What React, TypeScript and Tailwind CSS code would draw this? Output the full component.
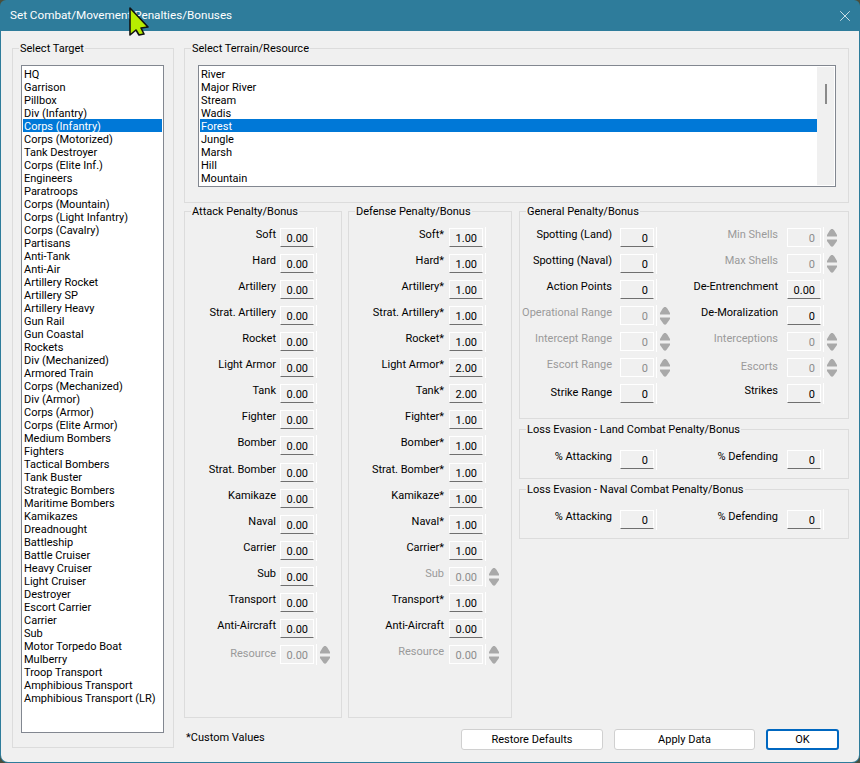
import { X } from "lucide-react";
import type { ReactNode } from "react";

const targets = [
  "HQ", "Garrison", "Pillbox", "Div (Infantry)", "Corps (Infantry)", "Corps (Motorized)", "Tank Destroyer",
  "Corps (Elite Inf.)", "Engineers", "Paratroops", "Corps (Mountain)", "Corps (Light Infantry)", "Corps (Cavalry)",
  "Partisans", "Anti-Tank", "Anti-Air", "Artillery Rocket", "Artillery SP", "Artillery Heavy", "Gun Rail",
  "Gun Coastal", "Rockets", "Div (Mechanized)", "Armored Train", "Corps (Mechanized)", "Div (Armor)",
  "Corps (Armor)", "Corps (Elite Armor)", "Medium Bombers", "Fighters", "Tactical Bombers", "Tank Buster",
  "Strategic Bombers", "Maritime Bombers", "Kamikazes", "Dreadnought", "Battleship", "Battle Cruiser",
  "Heavy Cruiser", "Light Cruiser", "Destroyer", "Escort Carrier", "Carrier", "Sub", "Motor Torpedo Boat",
  "Mulberry", "Troop Transport", "Amphibious Transport", "Amphibious Transport (LR)",
];
const terrain = ["River", "Major River", "Stream", "Wadis", "Forest", "Jungle", "Marsh", "Hill", "Mountain"];

const attack = [
  "Soft", "Hard", "Artillery", "Strat. Artillery", "Rocket", "Light Armor", "Tank", "Fighter", "Bomber",
  "Strat. Bomber", "Kamikaze", "Naval", "Carrier", "Sub", "Transport", "Anti-Aircraft",
];
const defense = [
  ["Soft*", "1.00"], ["Hard*", "1.00"], ["Artillery*", "1.00"], ["Strat. Artillery*", "1.00"], ["Rocket*", "1.00"],
  ["Light Armor*", "2.00"], ["Tank*", "2.00"], ["Fighter*", "1.00"], ["Bomber*", "1.00"], ["Strat. Bomber*", "1.00"],
  ["Kamikaze*", "1.00"], ["Naval*", "1.00"], ["Carrier*", "1.00"],
];

function Group({ title, className, children }: { title: string; className: string; children: ReactNode }) {
  return (
    <div className={`relative border border-[#dcdcdc] ${className}`}>
      <span className="absolute left-[6px] top-[-7px] bg-[#f0f0f0] px-px text-[11px] leading-[13px] text-black">
        {title}
      </span>
      {children}
    </div>
  );
}

function Spinner() {
  return (
    <svg width="10" height="20" viewBox="0 0 10 20" className="ml-[3px] fill-[#a9a9a9]">
      <path d="M5 1c1 0 1.7.6 2.3 1.6L10 7v1.500H0V7l2.700-4.400C3.300 1.600 4 1 5 1Z" />
      <path d="M0 11.500h10V13l-3.600 5c-.8 1-2 1-2.800 0L0 13Z" />
    </svg>
  );
}

type RowProps = {
  label: string;
  value: string;
  disabled?: boolean;
  spin?: boolean;
  low?: boolean;
  labelClass: string;
  slotClass: string;
};

function Row({ label, value, disabled, spin, low, labelClass, slotClass }: RowProps) {
  return (
    <div className="flex h-[19px] items-center">
      <span
        className={`shrink-0 whitespace-nowrap text-right text-[11px] leading-[13px] ${low ? "pb-[2px]" : "pb-[6px]"} ${
          disabled ? "text-[#9a9a9a]" : "text-black"
        } ${labelClass}`}
      >
        {label}
      </span>
      <div
        className={`flex h-[19px] w-[34px] shrink-0 items-center justify-end border border-white bg-[#f0f0f0] pr-[5px] pt-[2px] text-[11px] leading-[13px] ${
          disabled ? "text-[#8c8c8c]" : "border-b-[#6f6f6f] text-black"
        }`}
      >
        {value}
      </div>
      <div className={`flex shrink-0 items-center ${slotClass}`}>
        <div className="ml-[2px] h-[21px] w-px bg-white" />
        {spin && <Spinner />}
      </div>
    </div>
  );
}

function Column({ children, className = "pt-[16px]" }: { children: ReactNode; className?: string }) {
  return <div className={`flex flex-col gap-[7px] ${className}`}>{children}</div>;
}

function GeneralRow({
  left,
  right,
}: {
  left: Omit<RowProps, "labelClass" | "slotClass">;
  right: Omit<RowProps, "labelClass" | "slotClass">;
}) {
  return (
    <div className="flex">
      <Row {...left} labelClass="w-[100px] pr-[8px]" slotClass="w-[28px]" />
      <Row {...right} labelClass="w-[105px] pr-[9px]" slotClass="w-[26px]" />
    </div>
  );
}

function Button({ children, className }: { children: ReactNode; className: string }) {
  return (
    <button
      className={`flex h-[21px] items-center justify-center rounded-[3px] bg-white text-[11px] leading-none text-black ${className}`}
    >
      {children}
    </button>
  );
}

function ListBox({ items, selected, className, children }: { items: string[]; selected: string; className: string; children?: ReactNode }) {
  return (
    <div className={`flex border border-[#828790] bg-white p-px ${className}`}>
      <div className="min-w-0 flex-1">
        {items.map((item) => (
          <div
            key={item}
            className={`h-[13px] whitespace-nowrap pl-[1px] pt-[2px] text-[11px] leading-[11px] ${
              item === selected ? "bg-[#0078d7] text-white" : "text-black"
            }`}
          >
            {item}
          </div>
        ))}
      </div>
      {children}
    </div>
  );
}

export default function App() {
  const attackProps = { labelClass: "w-[95px] pr-[4px]", slotClass: "" };
  const defenseProps = { labelClass: "w-[100px] pr-[5px]", slotClass: "" };

  return (
    <div className="relative h-[763px] w-[860px] overflow-hidden bg-[#4a4f3c] font-['Roboto',sans-serif]">
      <div className="flex h-full flex-col overflow-hidden rounded-b-[8px] rounded-t-[6px] bg-[#2e7c9b] pb-px pl-px pr-px">
        <div className="flex h-[31px] shrink-0 items-center justify-between pl-[9px] pr-[5px]">
          <span className="text-[11.700px] text-white">Set Combat/Movement Penalties/Bonuses</span>
          <X size={18} strokeWidth={1} className="text-white" />
        </div>

        <div className="flex flex-1 gap-[10px] rounded-b-[7px] bg-[#f0f0f0] pl-[11px] pt-[17px]">
          <Group title="Select Target" className="h-[700px] w-[162px] px-[8px] pt-[16px]">
            <ListBox items={targets} selected="Corps (Infantry)" className="h-[668px] w-[143px]" />
          </Group>

          <div className="flex w-[665px] flex-col">
            <Group title="Select Terrain/Resource" className="h-[155px] pl-[13px] pt-[16px]">
              <ListBox items={terrain} selected="Forest" className="h-[122px] w-[638px]">
                <div className="flex w-[17px] shrink-0 justify-center bg-[#f0f0f0] pt-[17px]">
                  <div className="h-[20px] w-[2px] bg-[#8a8a8a]" />
                </div>
              </ListBox>
            </Group>

            <div className="mt-[8px] flex gap-[6px]">
              <Group title="Attack Penalty/Bonus" className="h-[507px] w-[158px]">
                <Column>
                  {attack.map((label, i) => (
                    <div key={label} className={i === 9 ? "mt-px" : ""}>
                      <Row label={label} value="0.00" {...attackProps} />
                    </div>
                  ))}
                  <Row label="Resource" value="0.00" disabled spin low {...attackProps} />
                </Column>
              </Group>

              <Group title="Defense Penalty/Bonus" className="h-[507px] w-[164px]">
                <Column>
                  {defense.map(([label, value], i) => (
                    <div key={label} className={i === 9 ? "mt-px" : ""}>
                      <Row label={label} value={value} {...defenseProps} />
                    </div>
                  ))}
                  <Row label="Sub" value="0.00" disabled spin {...defenseProps} />
                  <Row label="Transport*" value="1.00" {...defenseProps} />
                  <Row label="Anti-Aircraft" value="0.00" {...defenseProps} />
                  <Row label="Resource" value="0.00" disabled spin {...defenseProps} />
                </Column>
              </Group>

              <div className="ml-px flex w-[330px] flex-col">
                <Group title="General Penalty/Bonus" className="h-[208px]">
                  <Column>
                    <GeneralRow left={{ label: "Spotting (Land)", value: "0" }} right={{ label: "Min Shells", value: "0", disabled: true, spin: true }} />
                    <GeneralRow left={{ label: "Spotting (Naval)", value: "0" }} right={{ label: "Max Shells", value: "0", disabled: true, spin: true }} />
                    <GeneralRow left={{ label: "Action Points", value: "0" }} right={{ label: "De-Entrenchment", value: "0.00" }} />
                    <GeneralRow left={{ label: "Operational Range", value: "0", disabled: true, spin: true }} right={{ label: "De-Moralization", value: "0" }} />
                    <GeneralRow left={{ label: "Intercept Range", value: "0", disabled: true, spin: true }} right={{ label: "Interceptions", value: "0", disabled: true, spin: true }} />
                    <GeneralRow left={{ label: "Escort Range", value: "0", disabled: true, spin: true }} right={{ label: "Escorts", value: "0", disabled: true, spin: true, low: true }} />
                    <GeneralRow left={{ label: "Strike Range", value: "0", low: true }} right={{ label: "Strikes", value: "0" }} />
                  </Column>
                </Group>

                <Group title="Loss Evasion - Land Combat Penalty/Bonus" className="mt-[10px] h-[50px]">
                  <Column className="pt-[20px]">
                    <GeneralRow left={{ label: "% Attacking", value: "0" }} right={{ label: "% Defending", value: "0" }} />
                  </Column>
                </Group>

                <Group title="Loss Evasion - Naval Combat Penalty/Bonus" className="mt-[10px] h-[50px]">
                  <Column className="pt-[20px]">
                    <GeneralRow left={{ label: "% Attacking", value: "0" }} right={{ label: "% Defending", value: "0" }} />
                  </Column>
                </Group>
              </div>
            </div>

            <div className="mt-[10px] flex h-[23px] items-center">
              <span className="mb-[5px] ml-[2px] text-[11px] leading-[13px] text-black">*Custom Values</span>
              <div className="ml-auto flex gap-[11px] pr-[10px]">
                <Button className="w-[142px] border border-[#d0d0d0]">Restore Defaults</Button>
                <Button className="w-[141px] border border-[#d0d0d0]">Apply Data</Button>
                <Button className="w-[73px] border-2 border-[#0067c0]">OK</Button>
              </div>
            </div>
          </div>
        </div>
      </div>

      {/* mouse pointer caught in the screenshot */}
      <svg width="24" height="32" viewBox="0 0 24 32" className="absolute left-[127px] top-[6px]">
        <path d="M3 2 L21 21 L14 22 L17 28 L12 29 L9 24 L3 29 Z" fill="#b8ec00" stroke="#111" strokeWidth="1.6" strokeLinejoin="round" />
      </svg>
    </div>
  );
}
